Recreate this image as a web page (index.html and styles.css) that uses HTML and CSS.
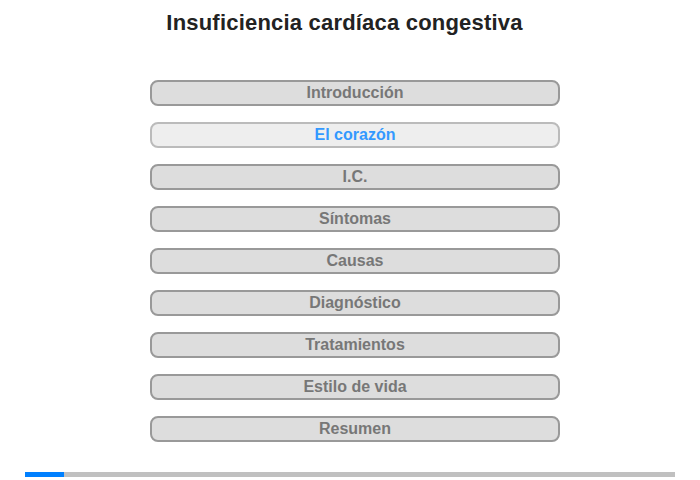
FILE: index.html
```html
<!DOCTYPE html>
<html lang="es">
<head>
<meta charset="utf-8">
<title>Insuficiencia cardíaca congestiva</title>
<link rel="stylesheet" href="styles.css">
</head>
<body>
<div class="page">
  <h1 class="title">Insuficiencia cardíaca congestiva</h1>
  <nav class="menu">
    <div class="item">Introducción</div>
    <div class="item active">El corazón</div>
    <div class="item">I.C.</div>
    <div class="item">Síntomas</div>
    <div class="item">Causas</div>
    <div class="item">Diagnóstico</div>
    <div class="item">Tratamientos</div>
    <div class="item">Estilo de vida</div>
    <div class="item">Resumen</div>
  </nav>
  <div class="progress"><div class="progress-fill" style="width:6%"></div></div>
</div>
</body>
</html>
```
FILE: styles.css
```css
html, body {
  margin: 0;
  padding: 0;
  background: #fff;
}
.page {
  width: 700px;
  height: 480px;
  font-family: "Liberation Sans", Arial, sans-serif;
  display: flex;
  flex-direction: column;
  align-items: center;
}
.title {
  margin: 10px 0 0 -11px;
  font-size: 22px;
  line-height: 26px;
  font-weight: bold;
  letter-spacing: 0.2px;
  color: #222;
}
.menu {
  margin-top: 44px;
  margin-left: 10px;
  display: flex;
  flex-direction: column;
  gap: 16px;
}
.item {
  box-sizing: border-box;
  width: 410px;
  height: 26px;
  border: 2px solid #999;
  border-radius: 8px;
  background: #ddd;
  color: #777;
  font-size: 16px;
  font-weight: bold;
  line-height: 22px;
  text-align: center;
}
.item.active {
  background: #eee;
  border-color: #bbb;
  color: #3399ff;
}
.progress {
  margin-top: 30px;
  width: 650px;
  height: 5px;
  background: #c0c0c0;
}
.progress-fill {
  height: 100%;
  background: #0080ff;
}
```
